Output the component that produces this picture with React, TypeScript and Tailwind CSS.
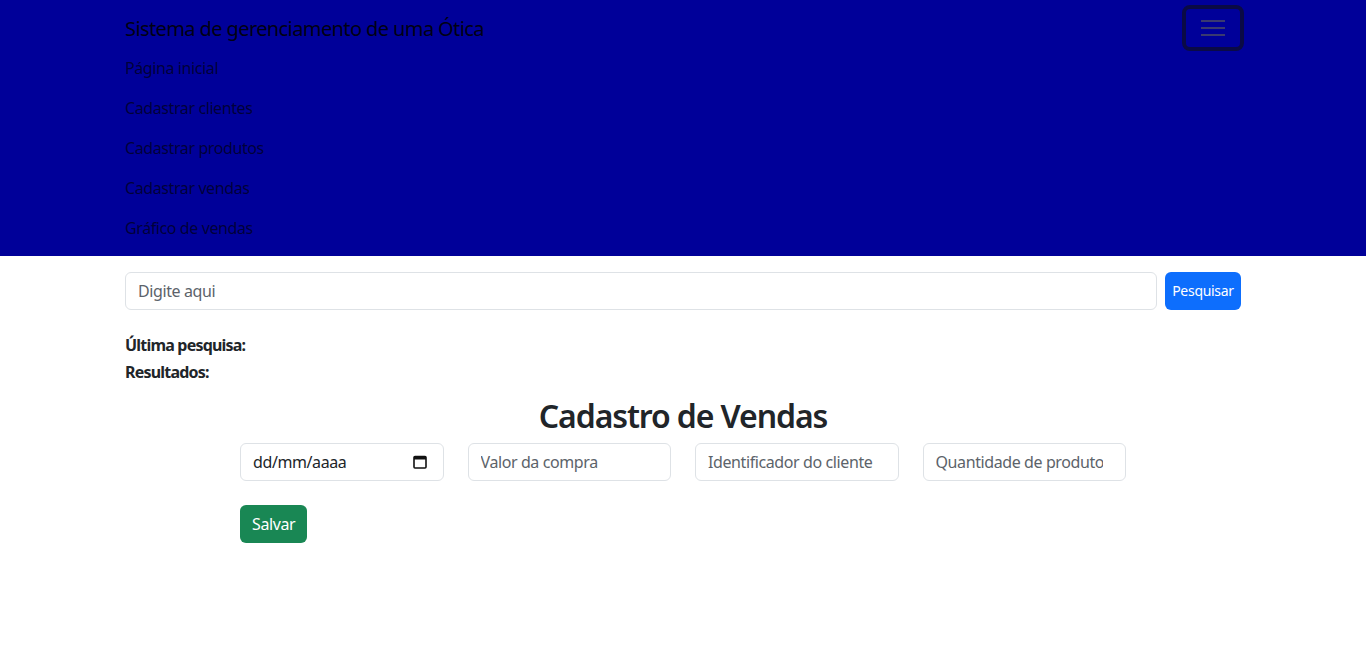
export default function App() {
  const links = [
    "Página inicial",
    "Cadastrar clientes",
    "Cadastrar produtos",
    "Cadastrar vendas",
    "Gráfico de vendas",
  ];

  const campo =
    "h-[38px] min-w-0 rounded-md border border-[#dee2e6] px-3 text-base tracking-[-0.4px] placeholder:text-[#5c636a]";

  return (
    <div className="min-h-[648px] bg-white font-['Noto_Sans',sans-serif] text-[#212529]">
      {/* navbar */}
      <nav className="bg-[#000099] py-2">
        <div className="mx-auto w-[1140px] px-3">
          <div className="flex h-[40px] items-center justify-between">
            <span className="mt-[2px] text-[20px] leading-[30px] tracking-[-0.6px] text-black/90">
              Sistema de gerenciamento de uma Ótica
            </span>
            <button className="-mr-[3px] -mt-[3px] flex h-[46px] w-[62px] flex-col items-center justify-center gap-[5px] self-start rounded-lg border-4 border-[#0a0a45]">
              <span className="h-[2px] w-[24px] bg-[#3a3a70]" />
              <span className="h-[2px] w-[24px] bg-[#3a3a70]" />
              <span className="h-[2px] w-[24px] bg-[#3a3a70]" />
            </button>
          </div>
          <ul className="flex flex-col">
            {links.map((l) => (
              <li key={l} className="py-2 text-base leading-6 tracking-[-0.4px] text-black/65">
                {l}
              </li>
            ))}
          </ul>
        </div>
      </nav>

      {/* busca */}
      <div className="mx-auto w-[1140px] px-3 pt-4">
        <div className="flex gap-2">
          <input className={campo + " flex-1"} placeholder="Digite aqui" />
          <button className="h-[38px] w-[76px] rounded-md bg-[#0d6efd] text-sm tracking-[-0.3px] text-white">
            Pesquisar
          </button>
        </div>
        <p className="mt-[23px] text-base font-bold leading-6 tracking-[-0.8px]">Última pesquisa:</p>
        <p className="mt-[3px] text-base font-bold leading-6 tracking-[-0.8px]">Resultados:</p>
      </div>

      {/* cadastro */}
      <div className="mx-auto mt-[13px] w-[886px]">
        <h2 className="text-center text-[32px] font-semibold leading-[38px] tracking-[-1.1px]">
          Cadastro de Vendas
        </h2>
        <div className="mt-2 grid grid-cols-4 gap-6">
          <div className="flex h-[38px] items-center justify-between rounded-md border border-[#dee2e6] pl-3 pr-4 text-base tracking-[-0.4px] text-[#212529]">
            <span>dd/mm/aaaa</span>
            <svg width="14" height="14" viewBox="0 0 14 14" fill="none">
              <rect x="1" y="1.5" width="12" height="11.5" rx="1" stroke="#111" strokeWidth="1.6" />
              <rect x="1" y="1.5" width="12" height="3" fill="#111" />
            </svg>
          </div>
          <input className={campo} placeholder="Valor da compra" />
          <input className={campo} placeholder="Identificador do cliente" />
          <input className={campo + " pr-[22px]"} placeholder="Quantidade de produtos" />
        </div>
        <button className="mt-6 h-[38px] rounded-md bg-[#198754] px-3 text-base tracking-[-0.4px] text-white">
          Salvar
        </button>
      </div>
    </div>
  );
}
